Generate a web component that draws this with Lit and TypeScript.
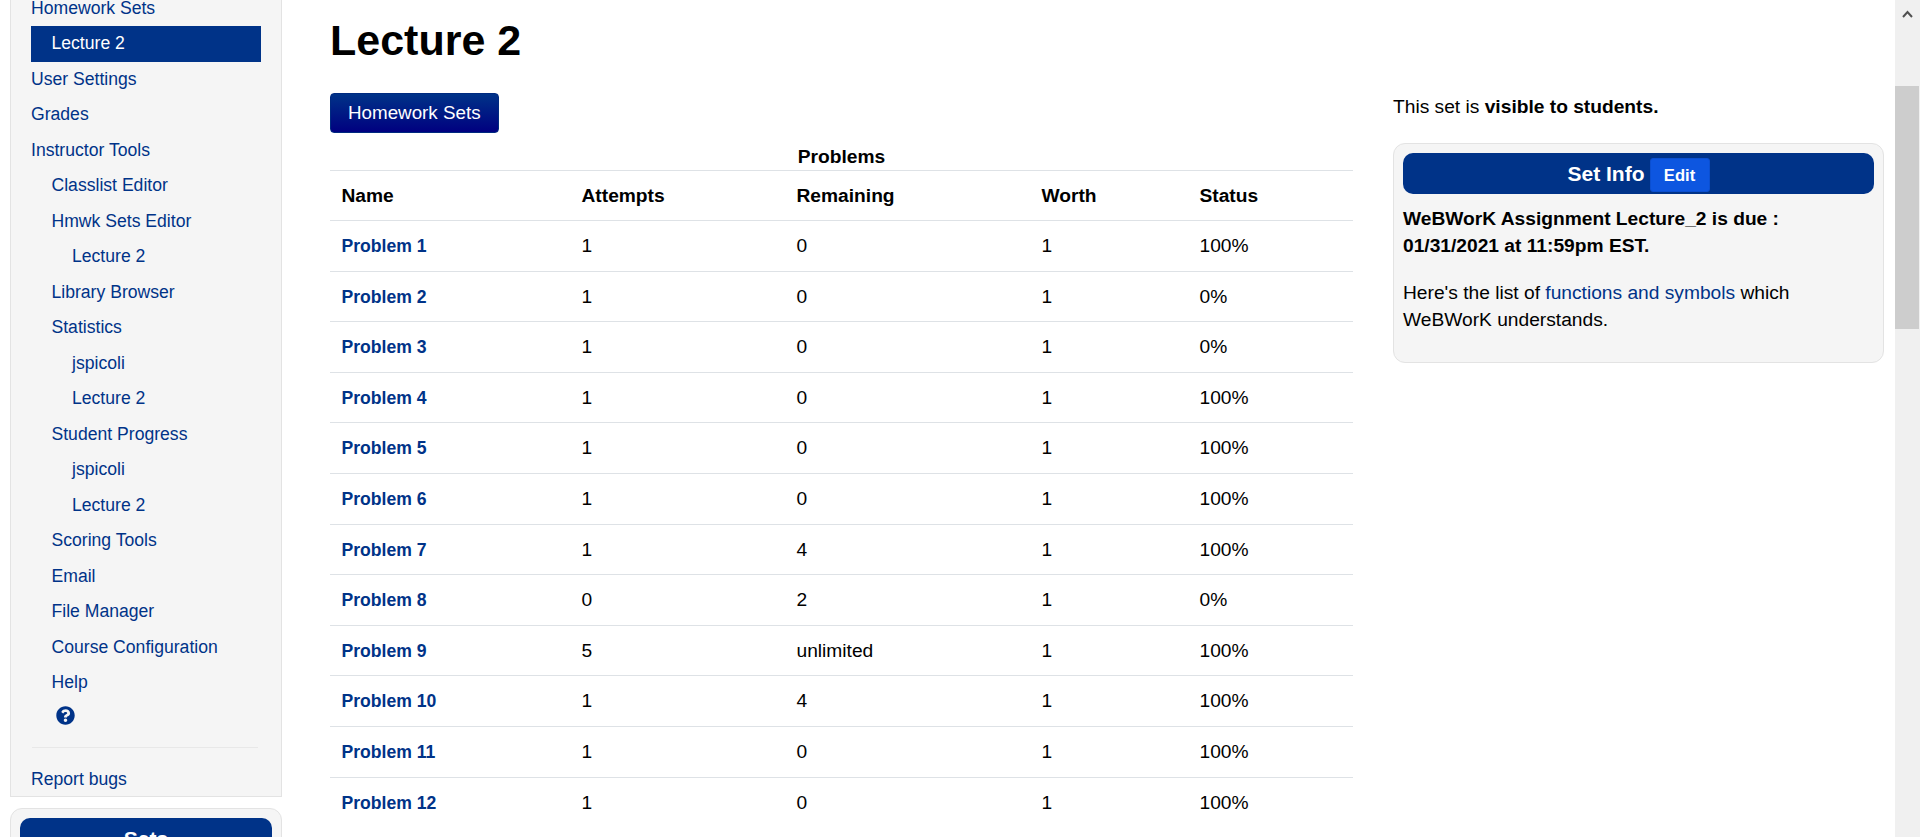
import { LitElement, html, css } from "lit";
import { customElement } from "lit/decorators.js";

const problems: [string, string, string, string, string][] = [
  ["Problem 1", "1", "0", "1", "100%"],
  ["Problem 2", "1", "0", "1", "0%"],
  ["Problem 3", "1", "0", "1", "0%"],
  ["Problem 4", "1", "0", "1", "100%"],
  ["Problem 5", "1", "0", "1", "100%"],
  ["Problem 6", "1", "0", "1", "100%"],
  ["Problem 7", "1", "4", "1", "100%"],
  ["Problem 8", "0", "2", "1", "0%"],
  ["Problem 9", "5", "unlimited", "1", "100%"],
  ["Problem 10", "1", "4", "1", "100%"],
  ["Problem 11", "1", "0", "1", "100%"],
  ["Problem 12", "1", "0", "1", "100%"],
];

const nav: [string, number, boolean?][] = [
  ["Homework Sets", 0],
  ["Lecture 2", 1, true],
  ["User Settings", 0],
  ["Grades", 0],
  ["Instructor Tools", 0],
  ["Classlist Editor", 1],
  ["Hmwk Sets Editor", 1],
  ["Lecture 2", 2],
  ["Library Browser", 1],
  ["Statistics", 1],
  ["jspicoli", 2],
  ["Lecture 2", 2],
  ["Student Progress", 1],
  ["jspicoli", 2],
  ["Lecture 2", 2],
  ["Scoring Tools", 1],
  ["Email", 1],
  ["File Manager", 1],
  ["Course Configuration", 1],
  ["Help", 1],
];

@customElement("app-root")
export class AppRoot extends LitElement {
  static styles = css`
    :host {
      display: flex;
      height: 837px;
      overflow: hidden;
      background: #fff;
      color: #000;
      font: 17.6px/27px "Liberation Sans", Arial, sans-serif;
    }
    a { color: #038; text-decoration: none; }
    .page { flex: 1; min-width: 0; display: flex; align-items: flex-start; }
    .side { width: 272px; margin: -9.2px 0 0 10px; flex: none; }
    .well {
      background: #f5f5f5; border: 1px solid #e3e3e3; border-top: none;
      padding: 0 20px; height: 806.2px; box-sizing: border-box;
    }
    .nav a, .bug { display: block; padding-top: 4px; height: 35.5px; box-sizing: border-box; white-space: nowrap; }
    .nav a.l1 { padding-left: 20.5px; }
    .nav a.l2 { padding-left: 41px; }
    .nav a.active { background: #038; color: #fff; }
    .help { display: block; margin: 5.5px 0 0 25px; }
    .sep { height: 1px; background: #e8e8e8; margin: 21.5px 3px 14.5px 1px; }
    .sets {
      margin-top: 11px; background: #f5f5f5; border: 1px solid #e3e3e3; border-radius: 12px;
      padding: 9px; height: 100px; box-sizing: border-box;
    }
    .sets h4 {
      margin: 0; background: #038; color: #fff; border-radius: 10px; text-align: center;
      font-size: 21px; font-weight: 700; line-height: 41px;
    }
    .main { width: 1023px; margin-left: 48px; flex: none; }
    h1 { margin: 13px 0 0; font-size: 43px; line-height: 54px; font-weight: 700; }
    .btn {
      display: inline-block; margin-top: 26px; padding: 0 17px; height: 40px; line-height: 38px; box-sizing: border-box;
      color: #fff; border: 1px solid #002a80; border-radius: 4px; font-size: 18.8px;
      background: linear-gradient(#038, #000080);
    }
    table { width: 100%; border-collapse: collapse; table-layout: fixed; font-size: 19.2px; }
    caption { font-weight: 700; line-height: 26px; height: 26px; padding-top: 11px; text-align: center; }
    th, td { text-align: left; padding: 12px 11.5px; line-height: 25.6px; border-top: 1px solid #dee2e6; }
    th { font-weight: 700; padding-bottom: 11.4px; }
    td.name a { font-weight: 700; font-size: 17.6px; line-height: 20px; }
    .right { width: 491px; margin-left: 40px; flex: none; padding-top: 93px; font-size: 19.2px; }
    .right p.vis { margin: 0; }
    .info {
      margin-top: 23px; background: #f5f5f5; border: 1px solid #e3e3e3; border-radius: 12px;
      padding: 9px; height: 220px; box-sizing: border-box;
    }
    .head {
      display: flex; align-items: center; justify-content: center; gap: 5px; background: #038; color: #fff; border-radius: 10px;
      height: 41px; font-size: 21px; font-weight: 700;
    }
    .edit {
      font-size: 16.6px; color: #fff; background: #0d56e0; border: 1px solid #0b4fd0; border-radius: 3px;
      width: 60px; height: 34px; line-height: 34px; text-align: center; box-sizing: border-box; margin-top: 3px;
    }
    .info p { margin: 0; }
    .due { margin-top: 10.5px !important; font-weight: 700; }
    .fn { margin-top: 20px !important; }
    .bar { width: 25px; flex: none; background: #f0f0f0; position: relative; }
    .thumb { position: absolute; left: 0; top: 86px; width: 24px; height: 243px; background: #cdcdcd; }
    .arrow { position: absolute; left: 7px; top: 10px; }
  `;

  render() {
    return html`
      <div class="page">
        <div class="side">
          <div class="well">
            <div class="nav">
              ${nav.map(
                ([t, l, act]) => html`<a href="#" class="l${l} ${act ? "active" : ""}">${t}</a>`
              )}
            </div>
            <svg class="help" width="19" height="19" viewBox="0 0 512 512" fill="#038">
              <path d="M504 256c0 137-111 248-248 248S8 393 8 256 119 8 256 8s248 111 248 248zM262.655 90c-54.497 0-89.255 22.957-116.549 63.758-3.536 5.286-2.353 12.415 2.715 16.258l34.699 26.31c5.205 3.947 12.621 3.008 16.665-2.122 17.864-22.658 30.113-35.797 57.303-35.797 20.429 0 45.698 13.148 45.698 32.958 0 14.976-12.363 22.667-32.534 33.976C247.128 238.528 216 254.941 216 296v4c0 6.627 5.373 12 12 12h56c6.627 0 12-5.373 12-12v-1.333c0-28.462 83.186-29.647 83.186-106.667 0-58.002-60.165-102-116.531-102zM256 338c-25.365 0-46 20.635-46 46 0 25.364 20.635 46 46 46s46-20.636 46-46c0-25.365-20.635-46-46-46z"/>
            </svg>
            <div class="sep"></div>
            <a class="bug" href="#">Report bugs</a>
          </div>
          <div class="sets"><h4>Sets</h4></div>
        </div>
        <div class="main">
          <h1>Lecture 2</h1>
          <a class="btn" href="#">Homework Sets</a>
          <table>
            <caption>Problems</caption>
            <colgroup><col style="width:240px"/><col style="width:215px"/><col style="width:245px"/><col style="width:158px"/><col/></colgroup>
            <thead><tr><th>Name</th><th>Attempts</th><th>Remaining</th><th>Worth</th><th>Status</th></tr></thead>
            <tbody>
              ${problems.map(
                (p) => html`<tr><td class="name"><a href="#">${p[0]}</a></td><td>${p[1]}</td><td>${p[2]}</td><td>${p[3]}</td><td>${p[4]}</td></tr>`
              )}
            </tbody>
          </table>
        </div>
        <div class="right">
          <p class="vis">This set is <b>visible to students.</b></p>
          <div class="info">
            <div class="head"><span>Set Info</span><a class="edit" href="#">Edit</a></div>
            <p class="due">WeBWorK Assignment Lecture_2 is due : 01/31/2021 at 11:59pm EST.</p>
            <p class="fn">Here's the list of <a href="#">functions and symbols</a> which WeBWorK understands.</p>
          </div>
        </div>
      </div>
      <div class="bar">
        <svg class="arrow" width="11" height="8" viewBox="0 0 11 8"><path d="M1 7l4.5-5L10 7" fill="none" stroke="#505050" stroke-width="2"/></svg>
        <div class="thumb"></div>
      </div>
    `;
  }
}
